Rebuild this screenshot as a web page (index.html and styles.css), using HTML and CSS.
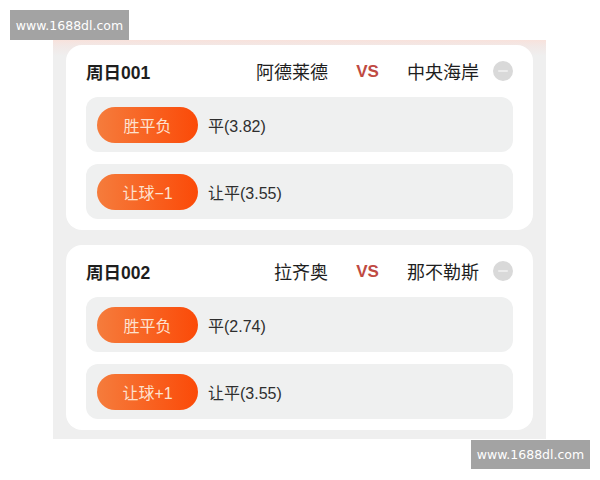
FILE: index.html
```html
<!DOCTYPE html>
<html lang="zh">
<head>
<meta charset="utf-8">
<link rel="stylesheet" href="styles.css">
</head>
<body>
<div class="wm wm-top">www.1688dl.com</div>
<div class="panel">
  <div class="card">
    <div class="head">
      <div class="title">周日001</div>
      <div class="team1">阿德莱德</div>
      <div class="vs">VS</div>
      <div class="team2">中央海岸</div>
      <div class="dot"><span></span></div>
    </div>
    <div class="row"><div class="btn">胜平负</div><div class="val">平(3.82)</div></div>
    <div class="row"><div class="btn">让球−1</div><div class="val">让平(3.55)</div></div>
  </div>
  <div class="card">
    <div class="head">
      <div class="title">周日002</div>
      <div class="team1">拉齐奥</div>
      <div class="vs">VS</div>
      <div class="team2">那不勒斯</div>
      <div class="dot"><span></span></div>
    </div>
    <div class="row"><div class="btn">胜平负</div><div class="val">平(2.74)</div></div>
    <div class="row"><div class="btn">让球+1</div><div class="val">让平(3.55)</div></div>
  </div>
</div>
<div class="wm wm-bottom">www.1688dl.com</div>
</body>
</html>
```
FILE: styles.css
```css
html, body {
  margin: 0;
  padding: 0;
  background: #ffffff;
}
body {
  width: 600px;
  height: 480px;
  position: relative;
  padding-top: 40px;
  box-sizing: border-box;
  font-family: "Liberation Sans", "Noto Sans CJK SC", sans-serif;
  overflow: hidden;
}
.wm {
  position: absolute;
  background: #a3a3a3;
  color: #ffffff;
  font-family: "DejaVu Sans", sans-serif;
  font-size: 12.5px;
  display: flex;
  align-items: center;
  justify-content: center;
  width: 119px;
}
.wm-top {
  left: 10px;
  top: 10px;
  height: 30px;
}
.wm-bottom {
  left: 471px;
  top: 440px;
  height: 29px;
}
.panel {
  margin-left: 53px;
  width: 493px;
  height: 399px;
  box-sizing: border-box;
  padding: 5px 13px 9px;
  background: linear-gradient(to bottom, #f8e2dc 0px, #f2e8e6 6px, #efefef 16px);
  display: flex;
  flex-direction: column;
  gap: 15px;
}
.card {
  background: #ffffff;
  border-radius: 16px;
  padding: 0 20px 11px;
  display: flex;
  flex-direction: column;
  gap: 12px;
}
.head {
  height: 52px;
  margin-bottom: -12px;
  display: flex;
  align-items: center;
  color: #1e1e1e;
  font-size: 18px;
}
.title {
  flex: 1;
  font-weight: 700;
  font-size: 17.5px;
}
.team1 {
  text-align: right;
}
.vs {
  width: 79px;
  text-align: center;
  color: #c04a42;
  font-weight: 700;
  font-size: 17px;
  padding-top: 2px;
}
.team2 {
  width: 73px;
}
.dot {
  width: 20px;
  height: 20px;
  border-radius: 50%;
  background: #d9d9d9;
  margin-left: 13px;
  display: flex;
  align-items: center;
  justify-content: center;
}
.dot span {
  width: 10px;
  height: 2px;
  background: #ececec;
  border-radius: 1px;
}
.row {
  height: 55px;
  border-radius: 12px;
  background: #eff0f0;
  display: flex;
  align-items: center;
  padding-left: 11px;
}
.btn {
  width: 101px;
  height: 36px;
  border-radius: 18px;
  background: linear-gradient(to right, #f57c3c, #fb4a08);
  color: #fde1cf;
  font-size: 16px;
  display: flex;
  align-items: center;
  justify-content: center;
}
.val {
  margin-left: 10px;
  font-size: 16px;
  color: #2e2e2e;
}
```
